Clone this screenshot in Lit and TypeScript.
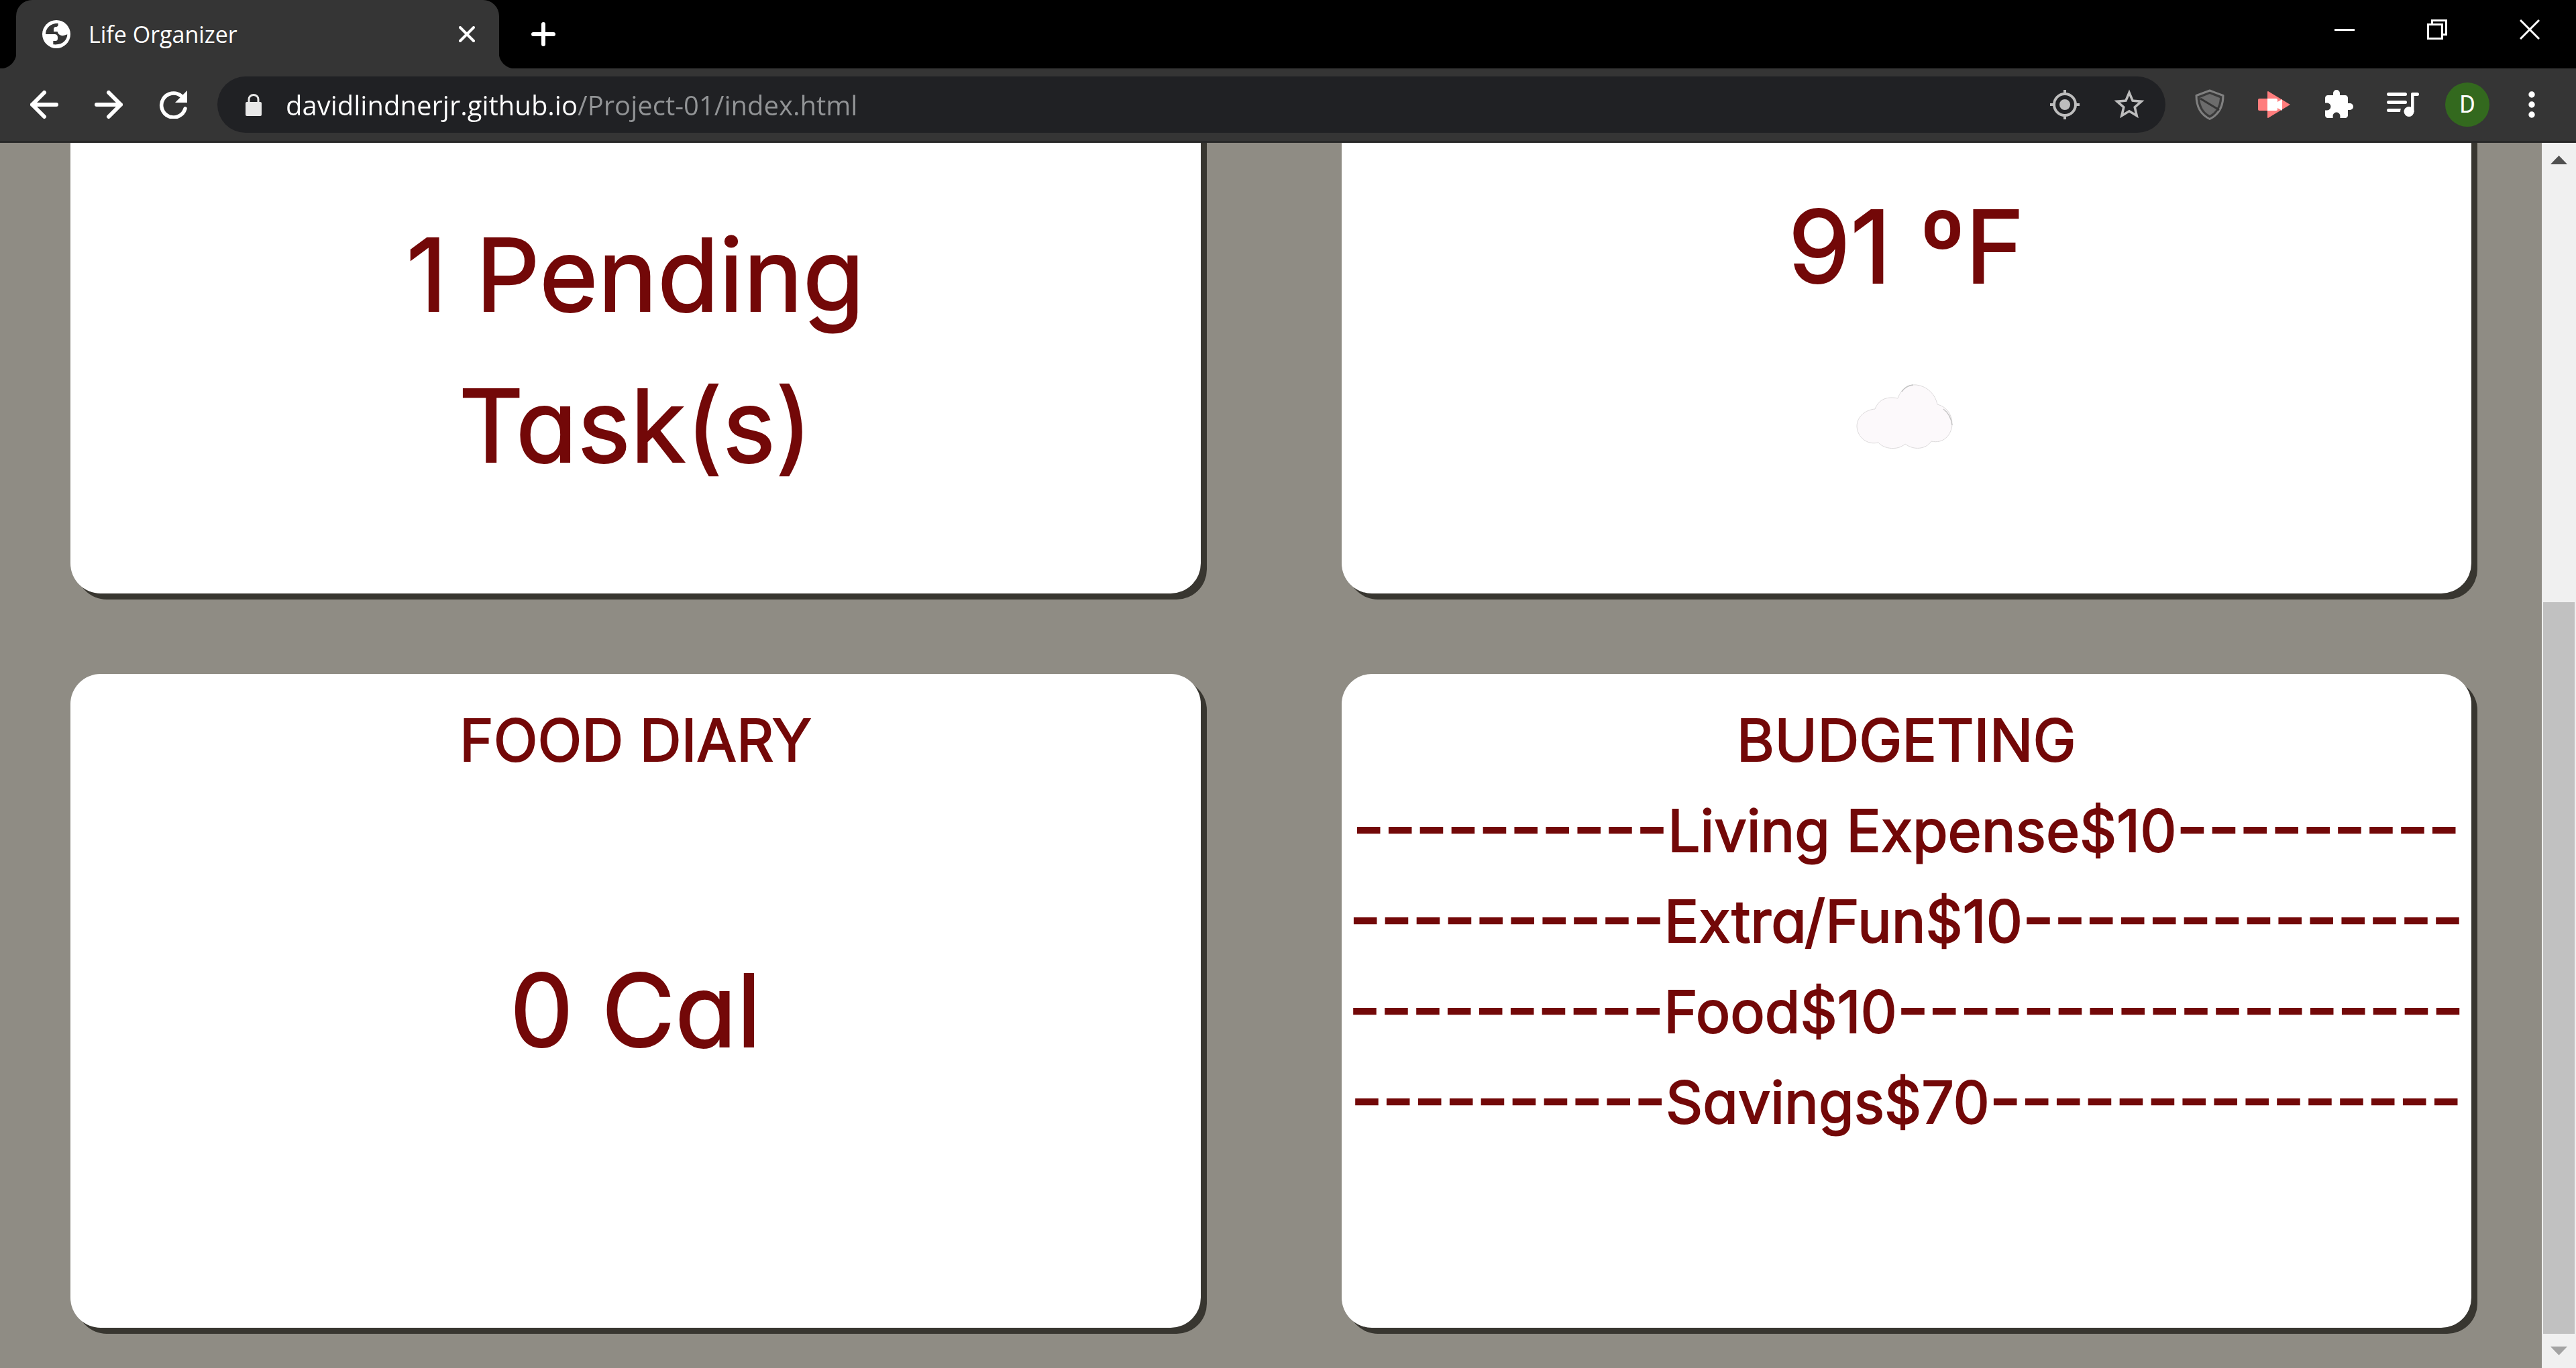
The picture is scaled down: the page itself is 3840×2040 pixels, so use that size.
import { LitElement, html, css, svg } from "lit";
import { customElement, property } from "lit/decorators.js";

const icons = {
  globe: svg`<svg width="42" height="42" viewBox="69 0 126 126"><circle cx="132" cy="63" r="63" fill="#fff"/><path fill="#353535" d="M84 63C84 36 105 14 140 14V23Q138 30 128 30 120 32 120 41V52H137Q140 66 155 69 166 71 181 64C180 90 160 113 118 109V93H131Q138 92 138 84V75Q136 63 125 63Z"/></svg>`,
  tabClose: svg`<svg width="24" height="24" viewBox="0 0 24 24"><path d="M2 2 22 22M22 2 2 22" stroke="#fff" stroke-width="4" stroke-linecap="round"/></svg>`,
  plus: svg`<svg width="36" height="36" viewBox="0 0 36 36"><path d="M18 3V33M3 18H33" stroke="#fff" stroke-width="6" stroke-linecap="round"/></svg>`,
  minimize: svg`<svg width="30" height="30" viewBox="0 0 30 30"><path fill="#fff" d="M0 14h30v3H0z"/></svg>`,
  restore: svg`<svg width="30" height="30" viewBox="0 0 30 30" fill="none" stroke="#fff" stroke-width="3"><path d="M1.500 7.500h21v21h-21zM7.500 7.500v-6h21v21h-6"/></svg>`,
  close: svg`<svg width="30" height="30" viewBox="0 0 30 30"><path d="M1 1 29 29M29 1 1 29" stroke="#fff" stroke-width="3"/></svg>`,
  back: svg`<svg width="42" height="42" viewBox="0 0 42 42" fill="none" stroke="#fff" stroke-width="6" stroke-linecap="round" stroke-linejoin="round"><path d="M21 3 3 21 21 39M3 21H39"/></svg>`,
  forward: svg`<svg width="42" height="42" viewBox="0 0 42 42" fill="none" stroke="#fff" stroke-width="6" stroke-linecap="round" stroke-linejoin="round"><path d="M21 3 39 21 21 39M39 21H3"/></svg>`,
  reload: svg`<svg width="42" height="42" viewBox="0 0 42 42"><path d="M33 8A18 18 0 1 0 39 27" fill="none" stroke="#fff" stroke-width="5.500" stroke-linecap="round"/><path d="M42 0V18H24Z" fill="#fff"/></svg>`,
  lock: svg`<svg width="24" height="33" viewBox="0 0 24 33"><rect y="12" width="24" height="21" rx="2" fill="#e8e8e8"/><path d="M5 13V8a7 6.500 0 0 1 14 0v5" fill="none" stroke="#e8e8e8" stroke-width="3"/></svg>`,
  target: svg`<svg width="44" height="44" viewBox="0 0 44 44"><circle cx="22" cy="22" r="16" fill="none" stroke="#bdbdbd" stroke-width="4"/><circle cx="22" cy="22" r="8" fill="#bdbdbd"/><path d="M22 0v6M22 38v6M0 22h6M38 22h6" stroke="#bdbdbd" stroke-width="4"/></svg>`,
  star: svg`<svg width="54" height="54" viewBox="0 0 24 24"><path fill="#bdbdbd" d="m22 9.240-7.190-.62L12 2 9.190 8.630 2 9.240l5.460 4.730L5.820 21 12 17.270 18.180 21l-1.630-7.030zM12 15.400l-3.760 2.270 1-4.280-3.320-2.880 4.380-.38L12 6.100l1.710 4.040 4.380.38-3.320 2.880 1 4.280z"/></svg>`,
  shield: svg`<svg width="44" height="46" viewBox="0 0 44 46"><path d="M22 2 42 9.500C42 27 35 38 22 44.500 9 38 2 27 2 9.500Z" fill="#3a3a3a" stroke="#808080" stroke-width="3" stroke-linejoin="round"/><path d="M22 7 37 13C36 26 31 34 22 39 13 34 8 26 7 13Z" fill="#6c6c6c"/><path d="M8 14 36 31" stroke="#353535" stroke-width="3"/></svg>`,
  video: svg`<svg width="48" height="40" viewBox="0 0 48 40"><rect y="11" width="17" height="18" rx="2" fill="#ff7d7d"/><path fill="#ff7d7d" d="M15 0 48 20 15 40a1 1 0 0 1-1-1V1a1 1 0 0 1 1-1z"/><path fill="#fff" d="M14 11h13q2 0 2 2v3l7-4v17l-7-4v2q0 2-2 2H14z"/></svg>`,
  puzzle: svg`<svg width="48" height="48" viewBox="0 0 24 24"><path fill="#fff" d="M20.500 11H19V7c0-1.100-.9-2-2-2h-4V3.500a2.500 2.500 0 0 0-5 0V5H4c-1.100 0-1.990.9-1.990 2v3.800H3.500c1.490 0 2.700 1.210 2.700 2.700s-1.210 2.700-2.700 2.700H2V20c0 1.100.9 2 2 2h3.800v-1.500c0-1.490 1.210-2.700 2.700-2.700s2.700 1.210 2.700 2.700V22H17c1.100 0 2-.9 2-2v-4h1.500a2.500 2.500 0 0 0 0-5z"/></svg>`,
  queue: svg`<svg width="48" height="36" viewBox="0 0 48 36" fill="#fff"><rect width="30" height="5" rx="2.500"/><rect y="12" width="30" height="5" rx="2.500"/><path d="M2.500 24H21q-1 2-1 5H2.500a2.500 2.500 0 0 1 0-5z"/><circle cx="33" cy="28.500" r="7.500"/><path d="M36 2q0-2 2-2h7.500a2.500 2.500 0 0 1 0 5H40.500V29H36z"/></svg>`,
  dots: svg`<svg width="10" height="40" viewBox="0 0 10 40" fill="#fff"><circle cx="5" cy="5" r="4.700"/><circle cx="5" cy="20" r="4.700"/><circle cx="5" cy="35" r="4.700"/></svg>`,
  cloud: svg`<svg width="150" height="98" viewBox="0 0 150 98"><path d="M28 38C34 22 48 19 62 22 68 6 78 1 90 2 106 4 118 16 121 31 136 35 143 47 143 61 142 77 130 90 112 86 104 98 86 100 73 90 62 100 42 98 33 88 16 92 2 80 1 64 1 49 14 39 28 38Z" fill="#fcf9fb" stroke="#dcdadb" stroke-width="1"/><path d="M68 12Q74 3 85 2M130 38Q141 46 143 62" fill="none" stroke="#c4c4c4" stroke-width="1.500"/></svg>`,
  up: svg`<svg width="25" height="13" viewBox="0 0 25 13"><path d="M12.500 0 25 13H0z" fill="#505050"/></svg>`,
  down: svg`<svg width="25" height="13" viewBox="0 0 25 13"><path d="M12.500 13 25 0H0z" fill="#a3a3a3"/></svg>`,
};

const buttonReset = css`
  * { box-sizing: border-box; }
  button { border: 0; padding: 0; background: none; color: inherit; font: inherit; display: flex; align-items: center; justify-content: center; flex: none; }
  svg { display: block; flex: none; }
`;

@customElement("browser-tabs")
class BrowserTabs extends LitElement {
  static styles = [buttonReset, css`
    :host { display: flex; align-items: flex-start; height: 102px; padding-left: 24px; background: #000; font-family: "Open Sans", "Noto Sans", sans-serif; }
    .tab { position: relative; display: flex; align-items: center; width: 720px; height: 102px; padding: 0 30px 0 39px; border-radius: 24px 24px 0 0; background: #353535; color: #fff; }
    .tab::before, .tab::after { content: ""; position: absolute; bottom: 0; width: 24px; height: 24px; }
    .tab::before { right: 100%; background: radial-gradient(circle at 0 0, #000 24px, #353535 25px); }
    .tab::after { left: 100%; background: radial-gradient(circle at 100% 0, #000 24px, #353535 25px); }
    .title { flex: 1; margin-left: 27px; font-size: 34px; line-height: 48px; }
    .tab-close { width: 36px; height: 48px; }
    .new-tab { width: 84px; height: 102px; margin-left: 24px; }
    .window { display: flex; margin-left: auto; }
    .window button { width: 138px; height: 87px; }
  `];
  render() {
    return html`
      <div class="tab">${icons.globe}<span class="title">Life Organizer</span>
        <button class="tab-close" aria-label="Close tab">${icons.tabClose}</button></div>
      <button class="new-tab" aria-label="New tab">${icons.plus}</button>
      <div class="window">
        <button aria-label="Minimize">${icons.minimize}</button>
        <button aria-label="Restore">${icons.restore}</button>
        <button aria-label="Close">${icons.close}</button>
      </div>`;
  }
}

@customElement("browser-toolbar")
class BrowserToolbar extends LitElement {
  static styles = [buttonReset, css`
    :host { display: flex; align-items: center; height: 111px; padding: 0 18px; border-bottom: 3px solid #282828; background: #353535; font-family: "Open Sans", "Noto Sans", sans-serif; }
    button { width: 96px; height: 84px; }
    .address { display: flex; flex: 1; align-items: center; height: 84px; margin: 0 18px; padding: 0 6px 0 42px; border-radius: 42px; background: #202124; }
    input { flex: 1; min-width: 0; height: 60px; margin: 0 0 0 36px; padding: 0; border: 0; outline: 0; font: inherit; font-size: 40px; color: #fff; -webkit-text-fill-color: transparent; background: linear-gradient(to right, #fff 434px, #929496 434px); -webkit-background-clip: text; background-clip: text; }
    .avatar { display: flex; align-items: center; justify-content: center; width: 66px; height: 66px; border-radius: 50%; background: #33691e; color: #fff; font: 36px Roboto, sans-serif; }
  `];
  render() {
    return html`
      <button aria-label="Back">${icons.back}</button>
      <button aria-label="Forward">${icons.forward}</button>
      <button aria-label="Reload">${icons.reload}</button>
      <div class="address">${icons.lock}
        <input type="text" aria-label="Address" .value=${"davidlindnerjr.github.io/Project-01/index.html"}>
        <button aria-label="Location">${icons.target}</button>
        <button aria-label="Bookmark">${icons.star}</button>
      </div>
      <button aria-label="Shield">${icons.shield}</button>
      <button aria-label="Video">${icons.video}</button>
      <button aria-label="Extensions">${icons.puzzle}</button>
      <button aria-label="Media">${icons.queue}</button>
      <button aria-label="Profile"><span class="avatar">D</span></button>
      <button aria-label="Menu">${icons.dots}</button>`;
  }
}

@customElement("budget-row")
class BudgetRow extends LitElement {
  static styles = css`
    :host { display: flex; justify-content: center; align-items: baseline; height: 135px; line-height: 135px; white-space: nowrap; }
    .rule { font-size: 102px; line-height: 0; }
  `;
  @property() label = "";
  @property({ type: Number }) amount = 0;
  @property({ type: Number }) before = 10;
  @property({ type: Number }) after = 10;
  render() {
    return html`<span class="rule">${"-".repeat(this.before)}</span><span>${this.label}$${this.amount}</span><span class="rule">${"-".repeat(this.after)}</span>`;
  }
}

const budget = [
  { label: "Living Expense", amount: 10, after: 9 },
  { label: "Extra/Fun", amount: 10, after: 14 },
  { label: "Food", amount: 10, after: 18 },
  { label: "Savings", amount: 70, after: 15 },
];

@customElement("app-root")
class AppRoot extends LitElement {
  static styles = [buttonReset, css`
    :host { display: flex; flex-direction: column; height: 100vh; overflow: hidden; background: #8f8c84; }
    .view { display: flex; flex: 1; min-height: 0; overflow: hidden; }
    main { display: grid; flex: 1; min-width: 0; grid-template-columns: 1fr 1fr; grid-template-rows: 1fr auto; gap: 120px 210px; padding: 0 105px 60px; color: #730808; font-family: Inter, "Open Sans", sans-serif; font-feature-settings: "cv11"; -webkit-text-stroke: 2px #730808; }
    .card { display: flex; flex-direction: column; align-items: center; min-width: 0; border-radius: 45px; background: #fff; box-shadow: 9px 9px 0 #383630; text-align: center; }
    .top { border-radius: 0 0 45px 45px; box-shadow: 9px 9px 0 #383630, 9px 0 0 #383630; }
    .bottom { min-height: 975px; padding-top: 32px; }
    h2, p { margin: 0; font-weight: 400; }
    h2, .rows { font-size: 86px; line-height: 135px; }
    .figure { font-size: 150px; line-height: 225px; }
    .tasks { max-width: 50%; margin-top: 84px; }
    .weather { margin: 42px 0 92px; }
    .calories { margin-top: 222px; }
    .rows { width: 100%; }
    .scrollbar { display: flex; flex-direction: column; flex: none; width: 51px; background: #f0f0f0; }
    .scrollbar button { height: 51px; }
    .track { display: flex; flex: 1; flex-direction: column; justify-content: flex-end; padding: 0 2px; }
    .thumb { height: 63.25%; background: #c1c1c1; }
  `];
  render() {
    return html`
      <browser-tabs></browser-tabs>
      <browser-toolbar></browser-toolbar>
      <div class="view">
        <main>
          <section class="card top"><p class="figure tasks">1 Pending Task(s)</p></section>
          <section class="card top"><p class="figure weather">91 ºF</p>${icons.cloud}</section>
          <section class="card bottom"><h2>FOOD DIARY</h2><p class="figure calories">0 Cal</p></section>
          <section class="card bottom"><h2>BUDGETING</h2>
            <div class="rows">${budget.map((b) => html`<budget-row .label=${b.label} .amount=${b.amount} .after=${b.after}></budget-row>`)}</div>
          </section>
        </main>
        <div class="scrollbar">
          <button aria-label="Scroll up">${icons.up}</button>
          <div class="track"><div class="thumb"></div></div>
          <button aria-label="Scroll down">${icons.down}</button>
        </div>
      </div>`;
  }
}
